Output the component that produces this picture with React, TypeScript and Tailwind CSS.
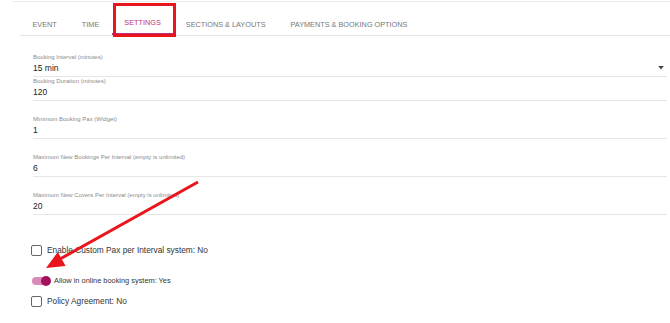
import React from 'react';

const tabs = ['EVENT', 'TIME', 'SETTINGS', 'SECTIONS & LAYOUTS', 'PAYMENTS & BOOKING OPTIONS'];

interface FieldProps {
    label: string;
    value: string;
    select?: boolean;
    className?: string;
}

const Field = ({ label, value, select, className }: FieldProps) => (
    <div className={`border-b border-[#e6e6e6] pb-[2px] ${className ?? ''}`}>
        <div className="text-[6px] leading-[8px] text-[#8a8a8a]">{label}</div>
        <div className="mt-[1px] flex items-center justify-between text-[8.5px] leading-[12px] text-[#222]">
            <span>{value}</span>
            {select && (
                <svg width="6" height="4" viewBox="0 0 7 5" className="mr-[3px]">
                    <path d="M0 0h7L3.5 4.5z" fill="#444" />
                </svg>
            )}
        </div>
    </div>
);

const Checkbox = ({ label }: { label: string }) => (
    <div className="flex h-[14px] items-center pl-[31px]">
        <span className="h-[11px] w-[11px] rounded-[2px] border-[1.5px] border-[#666]" />
        <span className="ml-[5px] text-[8.3px] text-[#333]">{label}</span>
    </div>
);

export default function App() {
    return (
        <div className="relative h-[323px] w-[670px] overflow-hidden bg-white font-['Liberation_Sans',Arial,sans-serif]">
            <div className="ml-[12px] mt-[1px] border-t border-[#ececec]" />

            {/* tabs */}
            <div className="ml-[20px] flex h-[34px] border-b border-[#e6e6e6]">
                {tabs.map((t) => (
                    <div
                        key={t}
                        className={`flex items-end px-[12.5px] pb-[6px] text-[7.3px] leading-[9px] ${
                            t === 'SETTINGS' ? 'border-b-2 border-[#bd2f7e] text-[#bd2f7e]' : 'text-[#777]'
                        }`}
                    >
                        {t}
                    </div>
                ))}
            </div>

            {/* fields */}
            <div className="ml-[33px] mr-[3px] mt-[17px]">
                <Field label="Booking Interval (minutes)" value="15 min" select />
                <Field label="Booking Duration (minutes)" value="120" className="mb-[14px]" />
                <Field label="Minimum Booking Pax (Widget)" value="1" className="mb-[14px]" />
                <Field label="Maximum New Bookings Per Interval (empty is unlimited)" value="6" className="mb-[14px]" />
                <Field label="Maximum New Covers Per Interval (empty is unlimited)" value="20" />
            </div>

            <div className="mt-[28px]">
                <Checkbox label="Enable Custom Pax per Interval system: No" />
                <div className="mt-[18px] flex h-[12px] items-center pl-[32px]">
                    <span className="relative h-[8px] w-[18px] rounded-full bg-[#d98ab6]">
                        <span className="absolute -top-[1px] right-[-1px] h-[10px] w-[10px] rounded-full bg-[#a3115e]" />
                    </span>
                    <span className="ml-[4px] text-[7.4px] text-[#333]">Allow in online booking system: Yes</span>
                </div>
                <div className="mt-[7px]">
                    <Checkbox label="Policy Agreement: No" />
                </div>
            </div>

            {/* annotation: highlight box */}
            <div className="absolute left-[113px] top-[3px] h-[34px] w-[63px] border-[3px] border-[#e8161c]" />

            {/* annotation: arrow */}
            <svg className="pointer-events-none absolute left-0 top-0" width="670" height="323">
                <line x1="198" y1="182" x2="60" y2="259" stroke="#e8161c" strokeWidth="3" />
                <polygon points="46,268 57.8,252 65.6,266" fill="#e8161c" />
            </svg>
        </div>
    );
}
